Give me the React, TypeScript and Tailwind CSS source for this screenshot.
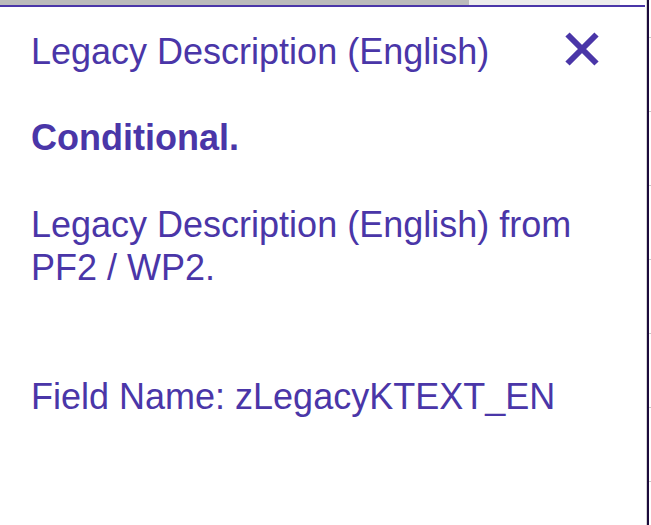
import React from "react";

const ticks = [0, 1, 2, 3, 4, 5, 6];

function CloseIcon() {
  return (
    <svg width="34" height="34" viewBox="0 0 34 34" className="shrink-0 mt-[2px]">
      <path d="M2.5 2.5 L31.5 31.5 M31.5 2.5 L2.5 31.5" stroke="#4a36a8" strokeWidth="6" fill="none" />
    </svg>
  );
}

export default function App() {
  return (
    <div className="w-[651px] h-[525px] bg-white flex overflow-hidden font-['Liberation_Sans',Arial,sans-serif] text-[#4a36a8]">
      <div className="w-[645px] flex flex-col">
        {/* progress strip */}
        <div className="h-[5px] flex">
          <div className="w-[469px] bg-[#bbbbbb]" />
          <div className="w-[151px] bg-[#ececec]" />
        </div>
        <div className="h-[2px] bg-[#4a36a8]" />

        <div className="pl-[31px] pr-[46px] text-[36px] leading-[43px]">
          <div className="mt-[23px] flex items-start justify-between">
            <h2 className="font-normal">Legacy Description (English)</h2>
            <CloseIcon />
          </div>
          <p className="mt-[43px] font-bold">Conditional.</p>
          <p className="mt-[44px]">Legacy Description (English) from PF2 / WP2.</p>
          <p className="mt-[86px]">Field Name: zLegacyKTEXT_EN</p>
        </div>
      </div>
      <div className="w-px bg-white" />
      <div className="w-px bg-[#d4d4d4]" />
      <div className="w-[2px] bg-[#1c0b3c]" />
      <div className="w-[2px] flex flex-col gap-[73px] pt-[37px]">
        {ticks.map((t) => (
          <div key={t} className="h-px bg-[#c8c8c8]" />
        ))}
      </div>
    </div>
  );
}
